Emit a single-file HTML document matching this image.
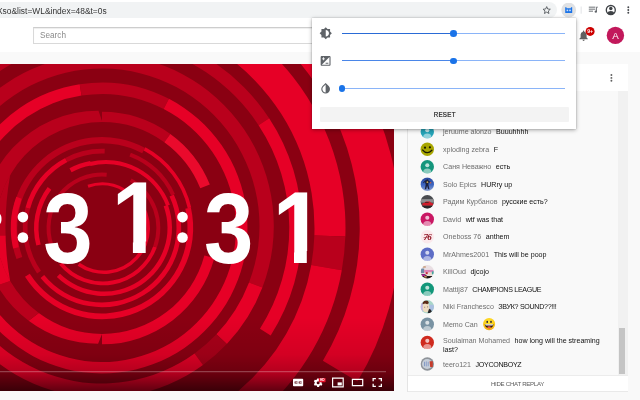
<!DOCTYPE html>
<html lang="en">
<head>
<meta charset="utf-8">
<title>Video filters popup</title>
<style>
*{box-sizing:border-box;margin:0;padding:0}
html,body{width:640px;height:400px;overflow:hidden;background:#f9f9f9;font-family:"Liberation Sans",sans-serif;-webkit-font-smoothing:antialiased}
#root{position:relative;width:640px;height:400px;overflow:hidden;background:#f9f9f9}
.abs{position:absolute}
#url,#searchtx,#hide,#resettx,.row,svg{will-change:transform}
/* browser toolbar */
#toolbar{left:0;top:0;width:640px;height:20px;background:#fff;border-bottom:1px solid #ececec}
#omnibox{left:-10px;top:2.3px;width:567px;height:15.4px;background:#f1f3f4;border-radius:8px}
#url{left:-3.2px;top:5.85px;font-size:8.4px;color:#333;white-space:nowrap;letter-spacing:0.02px}
/* yt header */
#ythead{left:0;top:19px;width:640px;height:32.5px;background:#fff}
#search{left:33px;top:26.8px;width:300px;height:17.7px;border:1px solid #d9d9d9;border-top-color:#cdcdcd;background:#fff;box-shadow:inset 0 1px 1px #eee}
#searchtx{left:40px;top:31.3px;font-size:8.2px;color:#8a8a8a}
/* video */
#video{left:0;top:64px;width:394px;height:327px;background:#8a0012;overflow:hidden}
/* chat */
#chat{left:407px;top:64px;width:221px;height:328px;background:#f9f9f9;border-left:1px solid #e4e4e4;border-right:1px solid #ececec}
#chathead{left:408px;top:64px;width:219.5px;height:26.5px;background:#fff}
#chatfoot{left:408px;top:375px;width:219.5px;height:17px;background:#fff;border-top:1px solid #ececec;border-bottom:1px solid #e9e9e9}
#hide{left:408px;top:380.1px;width:219px;text-align:center;font-size:6.1px;color:#5c5c5c;letter-spacing:-0.27px}
#sbtrack{left:618px;top:90.5px;width:9.5px;height:284.5px;background:#f1f1f1}
#sbthumb{left:619.3px;top:327.5px;width:6px;height:46px;background:#c4c4c4}
.row{position:absolute;left:442.5px;font-size:7.1px;white-space:nowrap;color:#111;line-height:9px}
.row .n{color:#6e6e6e;margin-right:4.5px}
.row .c{letter-spacing:-0.3px}
.av{position:absolute;left:420.6px;width:13.4px;height:13.4px;border-radius:50%;overflow:hidden}
/* popup */
#popup{left:312.2px;top:17.5px;width:263.8px;height:111.2px;background:#fff;box-shadow:0 1px 4px rgba(0,0,0,.35),0 0 1px rgba(0,0,0,.3)}
.trk{position:absolute;left:342px;height:1.2px;background:#8ab4f8;width:223px}
.trkf{position:absolute;left:342px;height:1.2px;background:#2a6bd6}
.thumb{position:absolute;width:6.6px;height:6.6px;border-radius:50%;background:#1a73e8}
#reset{left:319.5px;top:106.8px;width:249.5px;height:15.4px;background:#f3f3f3;border-radius:1px}
#resettx{left:319.5px;top:110.7px;width:249.5px;text-align:center;font-size:6.2px;line-height:7px;color:#1c1c1c;letter-spacing:0.32px;-webkit-text-stroke:0.18px #1c1c1c;transform:scaleY(1.14);transform-origin:50% 50%;will-change:transform}
</style>
</head>
<body>
<div id="root">

<!-- ===== browser toolbar ===== -->
<div id="toolbar" class="abs"></div>
<div id="omnibox" class="abs"></div>
<div id="url" class="abs">Xso&amp;list=WL&amp;index=48&amp;t=0s</div>
<svg class="abs" style="left:540px;top:3px" width="100" height="15" viewBox="540 3 100 15">
  <!-- star -->
  <path d="M546.7 6.6 L547.75 9.0 L550.3 9.25 L548.35 10.95 L548.95 13.5 L546.7 12.15 L544.45 13.5 L545.05 10.95 L543.1 9.25 L545.65 9.0 Z" fill="none" stroke="#4d5156" stroke-width="0.85" stroke-linejoin="round"/>
  <!-- extension -->
  <circle cx="568.7" cy="10" r="7.4" fill="#dfe1e4"/>
  <path d="M565.2 7.3 h1.3 v1 h4.4 v-1 h1.3 v5.6 h-7 z" fill="#1a73e8"/>
  <rect x="566.6" y="9.6" width="1.6" height="1.6" fill="#cfe0fb"/><rect x="569.2" y="9.6" width="1.6" height="1.6" fill="#cfe0fb"/>
  <!-- separator -->
  <rect x="580.7" y="6.5" width="0.8" height="7.2" fill="#dadce0"/>
  <!-- playlist -->
  <g fill="#5f6368"><rect x="588.8" y="6.7" width="6.6" height="0.9"/><rect x="588.8" y="8.7" width="6.6" height="0.9"/><rect x="588.8" y="10.7" width="4.2" height="0.9"/>
  <path d="M596.2 6.7 h1.7 v0.9 h-0.9 v4 a1.2 1.2 0 1 1 -0.8 -1.1 z"/></g>
  <!-- account -->
  <circle cx="610.8" cy="10" r="4.5" fill="#fff" stroke="#3f4246" stroke-width="1.35"/>
  <circle cx="610.8" cy="8.6" r="1.75" fill="#3f4246"/>
  <path d="M607.3 12.9 a3.600 2.600 0 0 1 7 0 a4.500 4.500 0 0 1 -7 0z" fill="#3f4246"/>
  <!-- menu -->
  <g fill="#45484c"><circle cx="628.3" cy="7.2" r="0.95"/><circle cx="628.3" cy="10" r="0.95"/><circle cx="628.3" cy="12.8" r="0.95"/></g>
</svg>

<!-- ===== youtube header ===== -->
<div id="ythead" class="abs"></div>
<div id="search" class="abs"></div>
<div id="searchtx" class="abs">Search</div>
<svg class="abs" style="left:575px;top:25px" width="60" height="24" viewBox="575 25 60 24">
  <!-- bell -->
  <path d="M583.6 30.6 a0.7 0.7 0 0 1 0.7 0.7 v0.4 a3 3 0 0 1 2.3 2.9 v2.9 l1.2 1.2 v0.5 h-8.4 v-0.5 l1.2 -1.2 v-2.9 a3 3 0 0 1 2.3 -2.9 v-0.4 a0.7 0.7 0 0 1 0.7 -0.7z M582.5 39.8 h2.2 a1.1 1.1 0 0 1 -2.2 0z" fill="#606060"/>
  <circle cx="590.1" cy="31.4" r="4.5" fill="#cc0000"/>
  <text x="590.1" y="33.3" font-family="Liberation Sans, sans-serif" font-size="5.2" font-weight="bold" fill="#fff" text-anchor="middle">9+</text>
  <!-- avatar -->
  <circle cx="615.4" cy="35.4" r="8.7" fill="#c2185b"/>
  <text x="615.4" y="38.9" font-family="Liberation Sans, sans-serif" font-size="9.8" fill="#fff" text-anchor="middle">A</text>
</svg>

<!-- ===== video ===== -->
<div id="video" class="abs">
<svg id="vsvg" width="394" height="327" viewBox="0 64 394 327" style="position:absolute;left:0;top:0">
  <rect x="0" y="64" width="394" height="327" fill="#8a0012"/>
  <g id="rings"><!--RS-->
<path fill="#e60026" d="M102.00 -70.00A298.00 298.00 0 0 1 357.44 381.48L322.89 360.73A257.70 257.70 0 0 0 102.00 -29.70z"/>
<path fill="#e60026" d="M102.00 -15.50A243.50 243.50 0 0 1 345.35 236.50L314.37 235.42A212.50 212.50 0 0 0 102.00 15.50z"/>
<path fill="#b9001c" d="M345.35 236.50A243.50 243.50 0 0 1 341.80 270.28L311.27 264.90A212.50 212.50 0 0 0 314.37 235.42z"/>
<path fill="#e60026" d="M341.80 270.28A243.50 243.50 0 0 1 102.00 471.50L102.00 440.50A212.50 212.50 0 0 0 311.27 264.90z"/>
<path fill="#e60026" d="M-71.21 128.00A200.00 200.00 0 0 1 -12.72 64.17L-5.43 74.57A187.30 187.30 0 0 0 -60.21 134.35z"/>
<path fill="#b9001c" d="M-12.72 64.17A200.00 200.00 0 0 1 269.16 118.20L258.55 125.17A187.30 187.30 0 0 0 -5.43 74.57z"/>
<path fill="#e60026" d="M269.16 118.20A200.00 200.00 0 0 1 270.68 335.46L259.97 328.64A187.30 187.30 0 0 0 258.55 125.17z"/>
<path fill="#b9001c" d="M-59.44 284.76A171.80 171.80 0 1 1 262.39 287.57L249.04 282.44A157.50 157.50 0 1 0 -46.00 279.87z"/>
<path fill="#e60026" d="M262.39 287.57A171.80 171.80 0 0 1 226.83 344.04L216.44 334.22A157.50 157.50 0 0 0 249.04 282.44z"/>
<path fill="#a90019" d="M226.83 344.04A171.80 171.80 0 0 1 202.98 364.99L194.58 353.42A157.50 157.50 0 0 0 216.44 334.22z"/>
<path fill="#e60026" d="M202.98 364.99A171.80 171.80 0 0 1 -59.44 284.76L-46.00 279.87A157.50 157.50 0 0 0 194.58 353.42z"/>
<path fill="#e60026" d="M-34.73 277.76A145.50 145.50 0 0 1 79.74 84.21L81.50 95.58A134.00 134.00 0 0 0 -23.92 273.83z"/>
<path fill="#b9001c" d="M79.74 84.21A145.50 145.50 0 0 1 168.96 98.82L163.67 109.03A134.00 134.00 0 0 0 81.50 95.58z"/>
<path fill="#e60026" d="M168.96 98.82A145.50 145.50 0 1 1 -34.73 277.76L-23.92 273.83A134.00 134.00 0 1 0 163.67 109.03z"/>
<path fill="#b9001c" d="M102.00 111.70A116.30 116.30 0 0 1 170.36 133.91L164.31 142.24A106.00 106.00 0 0 0 102.00 122.00z"/>
<path fill="#ea0a2c" d="M170.36 133.91A116.30 116.30 0 0 1 209.83 184.43L200.28 188.29A106.00 106.00 0 0 0 164.31 142.24z"/>
<path fill="#e60026" d="M214.34 258.10A116.30 116.30 0 0 1 102.00 344.30L102.00 334.00A106.00 106.00 0 0 0 204.39 255.43z"/>
<path fill="#e60026" d="M98.10 343.70A116.50 116.50 0 0 1 28.64 320.73L38.80 313.10A106.00 106.00 0 0 0 102.00 334.00z"/>
<path fill="#b9001c" d="M28.64 320.73A116.50 116.50 0 0 1 -2.79 285.45L10.20 281.00A106.00 106.00 0 0 0 38.80 313.10z"/>
<path fill="#e60026" d="M-2.79 285.45A116.50 116.50 0 0 1 -18.12 235.33L-3.74 235.39A106.00 106.00 0 0 0 10.20 281.00z"/>
<path fill="#b9001c" d="M-18.12 235.33A116.50 116.50 0 0 1 98.51 110.70L102.37 122.00A106.00 106.00 0 0 0 -3.74 235.39z"/>
<clipPath id="bu"><path d="M10.2 174.5A106.5 106.5 0 0 0 10.2 281.5A307.6 307.6 0 0 1 10.2 174.5z"/></clipPath><g clip-path="url(#bu)"><rect x="-6" y="170" width="20" height="65.5" fill="#b9001c"/><rect x="-6" y="235.5" width="20" height="50" fill="#e60026"/></g>
<path fill="#b9001c" d="M16.49 259.12A91.00 91.00 0 0 1 145.14 147.88L142.20 153.34A84.80 84.80 0 0 0 22.31 257.00z"/>
<path fill="#e60026" d="M145.43 147.35A91.60 91.60 0 0 1 191.25 207.39L187.74 208.20A88.00 88.00 0 0 0 143.72 150.52z"/>
<path fill="#e60026" d="M190.86 207.48A91.20 91.20 0 0 1 25.00 276.87L29.81 273.81A85.50 85.50 0 0 0 185.31 208.77z"/>
<path fill="#e60026" d="M13.14 248.52A91.20 91.20 0 0 1 16.30 196.81L21.66 198.76A85.50 85.50 0 0 0 18.69 247.23z"/>
<path fill="#e60026" d="M173.78 194.53A79.20 79.20 0 0 1 40.54 277.95L44.18 274.99A74.50 74.50 0 0 0 169.52 196.51z"/>
<path fill="#b9001c" d="M37.12 273.43A79.20 79.20 0 0 1 25.50 207.50L30.04 208.72A74.50 74.50 0 0 0 40.97 270.73z"/>
<path fill="#e60026" d="M25.50 207.50A79.20 79.20 0 0 1 65.18 157.88L67.37 162.04A74.50 74.50 0 0 0 30.04 208.72z"/>
<path fill="#b9001c" d="M65.18 157.88A79.20 79.20 0 0 1 104.76 148.85L104.60 153.55A74.50 74.50 0 0 0 67.37 162.04z"/>
<path fill="#b9001c" d="M130.85 152.85A80.50 80.50 0 0 1 174.96 193.98L171.33 195.67A76.50 76.50 0 0 0 129.42 156.58z"/>
<path fill="#e60026" d="M36.32 245.60A68.00 68.00 0 0 1 47.69 187.08L51.29 189.78A63.50 63.50 0 0 0 40.66 244.44z"/>
<path fill="#e60026" d="M69.45 168.30A68.00 68.00 0 0 1 90.19 161.03L90.97 165.46A63.50 63.50 0 0 0 71.60 172.25z"/>
<path fill="#e60026" d="M167.90 204.74A68.00 68.00 0 0 1 56.85 277.00L59.97 273.75A63.50 63.50 0 0 0 163.67 206.28z"/>
<path fill="#e60026" d="M89.55 162.02A68.00 68.00 0 0 1 169.90 204.74L166.14 206.11A64.00 64.00 0 0 0 90.52 165.90z"/>
<path fill="#e60026" d="M156.84 247.60A57.30 57.30 0 0 1 59.11 264.83L62.09 262.32A53.40 53.40 0 0 0 153.18 246.26z"/>
<path fill="#b9001c" d="M131.65 178.38A57.30 57.30 0 0 1 156.84 247.60L153.18 246.26A53.40 53.40 0 0 0 129.70 181.75z"/>
<path fill="#b9001c" d="M49.85 246.98A55.50 55.50 0 0 1 106.84 172.71L106.49 176.70A51.50 51.50 0 0 0 53.61 245.61z"/>
<path fill="#e60026" d="M139.24 198.43A46.00 46.00 0 0 1 77.62 265.68L79.62 262.81A42.50 42.50 0 0 0 136.56 200.68z"/>
<path fill="#e60026" d="M87.53 184.76A45.60 45.60 0 0 1 124.80 188.51L123.25 191.19A42.50 42.50 0 0 0 88.51 187.70z"/>
<!--RE--></g>
  <g id="digits" font-family="Liberation Sans, sans-serif" font-weight="bold" fill="#fff" font-size="93.5">
    <defs>
      <clipPath id="c1a"><path d="M100 170h60v71.6h-60zM132.9 241h12.8v14h-12.8z"/></clipPath>
      <clipPath id="c1b"><path d="M260 180h60v71.1h-60zM294 250h12.8v14h-12.8z"/></clipPath>
    </defs>
    <text transform="translate(43.15,263) scale(0.95,1.08)">3</text>
    <g clip-path="url(#c1a)"><text transform="translate(111.4,253.3) scale(1,1.085)">1</text></g>
    <text transform="translate(203.9,263) scale(0.95,1.08)">3</text>
    <g clip-path="url(#c1b)"><text transform="translate(272.6,262.8) scale(1,1.085)">1</text></g>
  </g>
  <defs><linearGradient id="cg" x1="0" y1="0" x2="0" y2="1"><stop offset="0" stop-color="#000" stop-opacity="0"/><stop offset="0.5" stop-color="#000" stop-opacity="0.08"/><stop offset="0.75" stop-color="#000" stop-opacity="0.22"/><stop offset="1" stop-color="#000" stop-opacity="0.58"/></linearGradient></defs>
  <rect x="0" y="318" width="394" height="73" fill="url(#cg)"/>
  <rect x="0" y="371.2" width="386" height="1" fill="#fff" fill-opacity="0.32"/>
  <!-- player controls -->
  <g id="ctl" fill="#fff">
    <!-- CC -->
    <path fill-rule="evenodd" d="M293.8 378.8h8.6a.8.8 0 0 1 .8.8v5.8a.8.8 0 0 1-.8.8h-8.6a.8.8 0 0 1-.8-.8v-5.8a.8.8 0 0 1 .8-.8zM294.6 381.4v2.2h2.9v-.9h-1.2v.3h-.7v-1h.7v.3h1.2v-.9zM298.7 381.4v2.2h2.9v-.9h-1.2v.3h-.7v-1h.7v.3h1.2v-.9z"/>
    <!-- gear -->
    <path fill-rule="evenodd" d="M317.2 378.4h1.9l.3 1.2.9.5 1.2-.4.95 1.65-.9.85v1l.9.85-.95 1.65-1.2-.4-.9.5-.3 1.2h-1.9l-.3-1.2-.9-.5-1.2.4-.95-1.65.9-.85v-1l-.9-.85.95-1.65 1.2.4.9-.5zM318.15 381.2a1.5 1.5 0 1 0 0 3 1.5 1.5 0 0 0 0-3z"/>
    <rect x="318.8" y="378" width="6.8" height="4.2" rx=".6" fill="#e8102a"/>
    <text x="322.2" y="381.3" font-family="Liberation Sans, sans-serif" font-size="3.2" font-weight="bold" text-anchor="middle" fill="#fff">HD</text>
    <!-- miniplayer -->
    <path fill-rule="evenodd" d="M332 377.6h11.8v9.8h-11.8zM333.2 378.8v7.4h9.4v-7.4z"/>
    <rect x="337.6" y="382.4" width="4.2" height="3" />
    <!-- theater -->
    <path fill-rule="evenodd" d="M351.8 378.8h11.5v7.5h-11.5zM353 380v5.1h9.1v-5.1z"/>
    <!-- fullscreen -->
    <path d="M372.5 378h3.4v1.3h-2.1v2h-1.3zM378.6 378h3.4v3.3h-1.3v-2h-2.1zM372.5 383.7h1.3v2h2.1v1.3h-3.4zM380.7 383.7h1.3v3.3h-3.4v-1.3h2.1z"/>
  </g>
  <g fill="#fff">
    <path d="M0 214c1.100 1.100 1.500 2.800 1.500 4.900s-.4 3.900-1.500 5.100z"/>
    <circle cx="22.9" cy="217.1" r="5.3"/><circle cx="22.9" cy="237.5" r="5.3"/>
    <circle cx="182.5" cy="217.1" r="5.3"/><circle cx="182.5" cy="237.5" r="5.3"/>
  </g>
</svg>
</div>

<!-- ===== chat ===== -->
<div id="chat" class="abs"></div>
<div id="chathead" class="abs"></div>
<div id="sbtrack" class="abs"></div>
<div id="sbthumb" class="abs"></div>
<div id="chatfoot" class="abs"></div>
<div id="hide" class="abs">HIDE CHAT REPLAY</div>
<svg class="abs" style="left:608px;top:72px" width="8" height="12" viewBox="608 72 8 12"><g fill="#606060"><circle cx="611.4" cy="75" r="0.95"/><circle cx="611.4" cy="77.9" r="0.95"/><circle cx="611.4" cy="80.8" r="0.95"/></g></svg>

<svg class="abs" style="left:418px;top:120px" width="20" height="256" viewBox="418 120 20 256">
<defs><filter id="bl" x="-10%" y="-10%" width="120%" height="120%"><feGaussianBlur stdDeviation="0.45"/></filter><linearGradient id="g4" x1="0" y1="0" x2="0" y2="1"><stop offset="0" stop-color="#27479c"/><stop offset="0.55" stop-color="#3e66c2"/><stop offset="1" stop-color="#8ea3cf"/></linearGradient><clipPath id="a0"><circle cx="427.3" cy="131.75" r="6.7"/></clipPath><clipPath id="a1"><circle cx="427.3" cy="149.25" r="6.7"/></clipPath><clipPath id="a2"><circle cx="427.3" cy="166.75" r="6.7"/></clipPath><clipPath id="a3"><circle cx="427.3" cy="184.25" r="6.7"/></clipPath><clipPath id="a4"><circle cx="427.3" cy="201.75" r="6.7"/></clipPath><clipPath id="a5"><circle cx="427.3" cy="219.25" r="6.7"/></clipPath><clipPath id="a6"><circle cx="427.3" cy="236.75" r="6.7"/></clipPath><clipPath id="a7"><circle cx="427.3" cy="254.25" r="6.7"/></clipPath><clipPath id="a8"><circle cx="427.3" cy="271.75" r="6.7"/></clipPath><clipPath id="a9"><circle cx="427.3" cy="289.25" r="6.7"/></clipPath><clipPath id="a10"><circle cx="427.3" cy="306.75" r="6.7"/></clipPath><clipPath id="a11"><circle cx="427.3" cy="324.25" r="6.7"/></clipPath><clipPath id="a12"><circle cx="427.3" cy="342.4" r="6.7"/></clipPath><clipPath id="a13"><circle cx="427.3" cy="364" r="6.7"/></clipPath></defs>
<g><circle cx="427.3" cy="131.75" r="6.7" fill="#25a4b8"/><circle cx="427.3" cy="130.2" r="2.05" fill="#fff" fill-opacity="0.72"/><path d="M423.2 137.05a4.1 3.6 0 0 1 8.2 0a6.7 6.7 0 0 1 -8.2 0z" fill="#fff" fill-opacity="0.5"/></g>
<g><circle cx="427.3" cy="149.25" r="6.7" fill="#a8a600"/><circle cx="425.0" cy="147.65" r="1.1" fill="#1a1a00"/><circle cx="429.90000000000003" cy="147.35" r="1.1" fill="#1a1a00"/><path d="M422.7 150.05q4.4 5.2 9.2 0.2" stroke="#1a1a00" stroke-width="1.3" fill="none" stroke-linecap="round"/></g>
<g><circle cx="427.3" cy="166.75" r="6.7" fill="#14967c"/><circle cx="427.3" cy="165.2" r="2.05" fill="#fff" fill-opacity="0.72"/><path d="M423.2 172.05a4.1 3.6 0 0 1 8.2 0a6.7 6.7 0 0 1 -8.2 0z" fill="#fff" fill-opacity="0.5"/></g>
<g clip-path="url(#a3)"><rect x="420.3" y="177.25" width="14" height="14" fill="url(#g4)"/><g filter="url(#bl)"><path d="M426.40000000000003 179.65l1.500 -.5l1 1.900l1.600 .8l-.5 .9l-1.300-.4l-.3 2.200l1.100 4.600h-1.300l-1.100-3.500l-1 3.500h-1.300l.9-4.700l-.8-2.400l-1.300 1.100l-.5-.7l1.700-1.700z" fill="#1d2440"/><circle cx="427.40000000000003" cy="182.15" r=".9" fill="#c9a64a"/><circle cx="430.6" cy="182.65" r=".75" fill="#d2603a"/></g></g>
<g clip-path="url(#a4)"><rect x="420.3" y="194.75" width="14" height="14" fill="#4a4c50"/><g filter="url(#bl)"><rect x="420.3" y="199.15" width="14" height="3.4" fill="#8f9092"/><rect x="420.3" y="205.65" width="14" height="3.4" fill="#2c2829"/><path d="M422.3 205.45v-2l2-.6l1.700-1.400h3.800l1.900 1.500l1.500.5v2z" fill="#d21f2b"/><rect x="425.1" y="201.95" width="3.600" height="1" fill="#5a2226"/></g></g>
<g><circle cx="427.3" cy="219.25" r="6.7" fill="#c91763"/><circle cx="427.3" cy="217.7" r="2.05" fill="#fff" fill-opacity="0.72"/><path d="M423.2 224.55a4.1 3.6 0 0 1 8.2 0a6.7 6.7 0 0 1 -8.2 0z" fill="#fff" fill-opacity="0.5"/></g>
<g><circle cx="427.3" cy="236.75" r="6.7" fill="#fbe9ec"/><text x="427.3" y="239.85" font-family="Liberation Serif, serif" font-style="italic" font-weight="bold" font-size="9" fill="#8e1020" text-anchor="middle" letter-spacing="-0.6">76</text><path d="M423.5 237.7l7.400 -1.100" stroke="#8e1020" stroke-width=".55"/></g>
<g><circle cx="427.3" cy="254.25" r="6.7" fill="#5d6dc6"/><circle cx="427.3" cy="252.7" r="2.05" fill="#fff" fill-opacity="0.72"/><path d="M423.2 259.55a4.1 3.6 0 0 1 8.2 0a6.7 6.7 0 0 1 -8.2 0z" fill="#fff" fill-opacity="0.5"/></g>
<g clip-path="url(#a8)"><rect x="420.3" y="264.75" width="14" height="14" fill="#e9dfe3"/><g filter="url(#bl)"><rect x="420.8" y="268.55" width="3.400" height="4.600" fill="#6f8aa6"/><rect x="424.1" y="269.95" width="9.500" height="2.600" fill="#d985b8"/><rect x="425.7" y="272.15" width="2" height="2" fill="#c7283c"/><rect x="428.5" y="272.35" width="3.200" height="3" fill="#f0d9c8"/><rect x="431.90000000000003" y="271.35" width="1.800" height="3" fill="#3fa7a0"/><path d="M420.8 274.35h4l2.500 1.600h5.500l1 3h-13z" fill="#1d1518"/><rect x="421.7" y="274.35" width="3.600" height="1.700" fill="#b21c9a"/><rect x="424.3" y="275.75" width="2.400" height="1.800" fill="#c98a5c"/><rect x="422.8" y="266.15" width="3" height="1.600" fill="#c9a184"/></g></g>
<g><circle cx="427.3" cy="289.25" r="6.7" fill="#12977a"/><circle cx="427.3" cy="287.7" r="2.05" fill="#fff" fill-opacity="0.72"/><path d="M423.2 294.55a4.1 3.6 0 0 1 8.2 0a6.7 6.7 0 0 1 -8.2 0z" fill="#fff" fill-opacity="0.5"/></g>
<g clip-path="url(#a10)"><rect x="420.3" y="299.75" width="14" height="14" fill="#a9d6c9"/><g filter="url(#bl)"><rect x="428.8" y="304.75" width="6" height="6" fill="#a9bfe0"/><rect x="420.3" y="302.75" width="2.600" height="10" fill="#c5b6e2"/><ellipse cx="426.0" cy="307.55" rx="3.300" ry="4.700" fill="#efdcc0"/><path d="M422.5 304.15q.4-3.400 3.200-3.600q2.800-.2 3.200 2.400l-1.600 1.200l-2.200-.6z" fill="#5a2a18"/><path d="M429.0 308.75q2.600 .4 3 4.600h-4.400z" fill="#28262a"/><rect x="424.1" y="306.85" width="1.100" height=".6" fill="#6a5a58"/><rect x="427.0" y="306.65" width="1.100" height=".6" fill="#5a4a50"/></g></g>
<g><circle cx="427.3" cy="324.25" r="6.7" fill="#7993a3"/><circle cx="427.3" cy="322.7" r="2.05" fill="#fff" fill-opacity="0.72"/><path d="M423.2 329.55a4.1 3.6 0 0 1 8.2 0a6.7 6.7 0 0 1 -8.2 0z" fill="#fff" fill-opacity="0.5"/></g>
<g><circle cx="427.3" cy="342.4" r="6.7" fill="#cf2a1e"/><circle cx="427.3" cy="340.84999999999997" r="2.05" fill="#fff" fill-opacity="0.72"/><path d="M423.2 347.7a4.1 3.6 0 0 1 8.2 0a6.7 6.7 0 0 1 -8.2 0z" fill="#fff" fill-opacity="0.5"/></g>
<g clip-path="url(#a13)"><rect x="420.3" y="357" width="14" height="14" fill="#8e9399"/><g filter="url(#bl)"><circle cx="427.1" cy="364" r="5.1" fill="#c6ced8"/><rect x="424.1" y="361.8" width="1" height="4.400" fill="#7f96c4"/><rect x="425.90000000000003" y="361.4" width="1" height="5" fill="#93a5cc"/><rect x="427.7" y="361.8" width="1" height="4.400" fill="#8aa0c8"/><path d="M429.6 361.2h3.200v5.800h-2.600z" fill="#c63a2c"/></g></g>
</svg>
<svg class="abs" style="left:482px;top:316px" width="16" height="16" viewBox="482 316 16 16"><defs><radialGradient id="eg" cx="0.5" cy="0.35" r="0.7"><stop offset="0" stop-color="#ffe636"/><stop offset="0.65" stop-color="#fccc14"/><stop offset="1" stop-color="#f29410"/></radialGradient></defs><circle cx="489.1" cy="324.1" r="6.05" fill="url(#eg)"/><ellipse cx="487.20000000000005" cy="321.90000000000003" rx=".8" ry="1.1" fill="#1c1a3a"/><ellipse cx="491.0" cy="321.90000000000003" rx=".8" ry="1.1" fill="#1c1a3a"/><path d="M484.70000000000005 324.20000000000005h8.8a4.4 4 0 0 1 -8.8 0z" fill="#2a1410"/><path d="M485.1 324.20000000000005h8l-.5 1.200h-7z" fill="#fff"/><ellipse cx="489.1" cy="327.20000000000005" rx="1.900" ry="1" fill="#ee5a4a"/></svg>
<div id="rows">
<div class="row" style="top:128.2px"><span class="n">jeruume alonzo</span>Buuuhhhh</div>
<div class="row" style="top:145.7px"><span class="n">xploding zebra</span>F</div>
<div class="row" style="top:163.2px"><span class="n">Саня Неважно</span>есть</div>
<div class="row" style="top:180.7px"><span class="n">Solo Epics</span>HURry up</div>
<div class="row" style="top:198.2px"><span class="n">Радим Курбанов</span>русские есть?</div>
<div class="row" style="top:215.7px"><span class="n">David</span>wtf was that</div>
<div class="row" style="top:233.2px"><span class="n">Oneboss 76</span>anthem</div>
<div class="row" style="top:250.7px"><span class="n">MrAhmes2001</span>This will be poop</div>
<div class="row" style="top:268.2px"><span class="n">KillOud</span>djcojo</div>
<div class="row" style="top:285.7px"><span class="n">Mattij87</span><span class="c">CHAMPIONS LEAGUE</span></div>
<div class="row" style="top:303.2px"><span class="n">Niki Franchesco</span><span class="c">ЗВУК? SOUND??!!!</span></div>
<div class="row" style="top:320.7px"><span class="n">Memo Can</span></div>
<div class="row" style="top:336.7px"><span class="n">Soulaiman Mohamed</span>how long will the streaming<br>last?</div>
<div class="row" style="top:360.7px"><span class="n">teero121</span><span class="c">JOYCONBOYZ</span></div>
</div>

<!-- ===== popup ===== -->
<div id="popup" class="abs"></div>
<div class="trk" style="top:32.9px"></div><div class="trkf" style="top:32.9px;width:111px"></div><div class="thumb" style="left:450.2px;top:30.2px"></div>
<div class="trk" style="top:60.3px"></div><div class="trkf" style="top:60.3px;width:111px;background:#4a86e8"></div><div class="thumb" style="left:450.2px;top:57.7px"></div>
<div class="trk" style="top:87.9px"></div><div class="thumb" style="left:338.5px;top:85.2px"></div>
<svg class="abs" style="left:316px;top:24px" width="20" height="74" viewBox="316 24 20 74">
  <g fill="#5f6368">
  <path transform="translate(319.27,26.77) scale(0.54)" d="M20 15.31L23.31 12 20 8.69V4h-4.69L12 .69 8.69 4H4v4.69L.69 12 4 15.31V20h4.69L12 23.31 15.31 20H20v-4.69zM12 18V6c3.310 0 6 2.690 6 6s-2.690 6-6 6z"/>
  <path transform="translate(319.0,54.3) scale(0.55)" d="M19 3H5c-1.100 0-2 .9-2 2v14c0 1.100.9 2 2 2h14c1.100 0 2-.9 2-2V5c0-1.100-.9-2-2-2zM5.500 7.500h2v-2H9v2h2V9H9v2H7.500V9h-2V7.500zM19 19H5L19 5v14zm-2-2v-1.500h-5V17h5z"/>
  <path transform="translate(319.1,81.7) scale(0.545)" d="M17.660 7.930L12 2.270 6.340 7.930c-3.120 3.120-3.120 8.190 0 11.310C7.900 20.800 9.950 21.580 12 21.580c2.050 0 4.100-.78 5.660-2.340 3.120-3.120 3.120-8.190 0-11.310zM12 19.590c-1.600 0-3.110-.62-4.240-1.760C6.620 16.690 6 15.190 6 13.590s.62-3.110 1.760-4.240L12 5.100v14.490z"/>
  </g>
</svg>
<div id="reset" class="abs"></div>
<div id="resettx" class="abs">RESET</div>

</div>
</body>
</html>
